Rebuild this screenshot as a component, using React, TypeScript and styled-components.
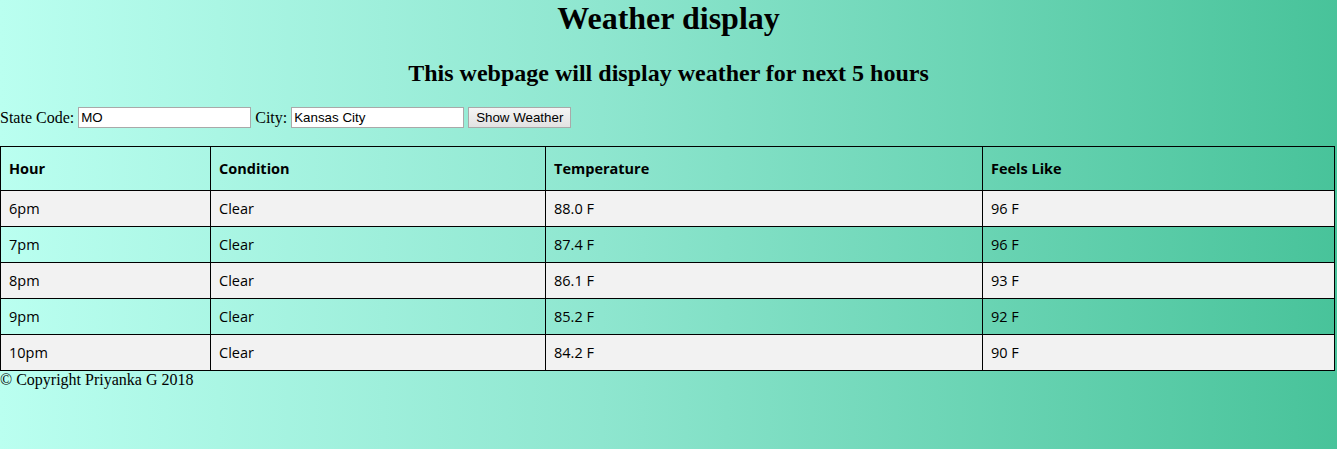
import React from "react";
import styled, { createGlobalStyle } from "styled-components";

const Global = createGlobalStyle`
  html, body { margin: 0; padding: 0; }
  body {
    min-height: 449px;
    font-family: "Liberation Serif", "Times New Roman", serif;
    font-size: 16px;
    color: #000;
    background: linear-gradient(to right, #bafff0 0%, #8ee6cf 45%, #48c39a 100%);
  }
`;

const Page = styled.div`
  min-height: 449px;
`;

const Title = styled.h1`
  margin: 0;
  text-align: center;
  font-size: 32px;
  line-height: 37px;
  font-weight: bold;
`;

const Subtitle = styled.h2`
  margin: 22px 0 0;
  text-align: center;
  font-size: 24px;
  line-height: 28px;
  font-weight: bold;
`;

const Form = styled.form`
  display: flex;
  align-items: center;
  height: 21px;
  margin-top: 20px;
  margin-bottom: 18px;
`;

const Label = styled.label`
  margin-right: 4px;
`;

const Input = styled.input<{ $w: number }>`
  box-sizing: border-box;
  width: ${(p) => p.$w}px;
  height: 21px;
  border: 1px solid #a9a9a9;
  background: #fff;
  font-family: "Liberation Sans", Arial, sans-serif;
  font-size: 13.33px;
  padding: 1px 2px;
  margin: 0 4px 0 0;
`;

const Button = styled.button`
  box-sizing: border-box;
  height: 21px;
  width: 103px;
  border: 1px solid #a9a9a9;
  background: linear-gradient(#f5f5f5, #e2e2e2);
  font-family: "Liberation Sans", Arial, sans-serif;
  font-size: 13.33px;
  color: #000;
  padding: 0 6px;
  margin: 0;
`;

const Table = styled.table`
  border-collapse: collapse;
  width: 1334px;
  table-layout: fixed;
  font-family: "Open Sans", "DejaVu Sans", sans-serif;
  font-size: 14.5px;
`;

const Th = styled.th`
  border: 1px solid #000;
  text-align: left;
  padding: 12px 8px;
  height: 19px;
  font-weight: bold;
`;

const Row = styled.tr<{ $alt: boolean }>`
  background: ${(p) => (p.$alt ? "transparent" : "#f2f2f2")};
`;

const Td = styled.td`
  border: 1px solid #000;
  padding: 8px 8px;
  height: 19px;
`;

const Footer = styled.div`
  line-height: 18px;
`;

const rows = [
  ["6pm", "Clear", "88.0 F", "96 F"],
  ["7pm", "Clear", "87.4 F", "96 F"],
  ["8pm", "Clear", "86.1 F", "93 F"],
  ["9pm", "Clear", "85.2 F", "92 F"],
  ["10pm", "Clear", "84.2 F", "90 F"],
];

export default function App() {
  return (
    <Page>
      <Global />
      <Title>Weather display</Title>
      <Subtitle>This webpage will display weather for next 5 hours</Subtitle>
      <Form onSubmit={(e) => e.preventDefault()}>
        <Label>State Code:</Label>
        <Input $w={173} defaultValue="MO" />
        <Label>City:</Label>
        <Input $w={173} defaultValue="Kansas City" />
        <Button type="button">Show Weather</Button>
      </Form>
      <Table>
        <colgroup>
          <col style={{ width: 210 }} />
          <col style={{ width: 335 }} />
          <col style={{ width: 437 }} />
          <col style={{ width: 352 }} />
        </colgroup>
        <thead>
          <tr>
            <Th>Hour</Th>
            <Th>Condition</Th>
            <Th>Temperature</Th>
            <Th>Feels Like</Th>
          </tr>
        </thead>
        <tbody>
          {rows.map((r, i) => (
            <Row key={i} $alt={i % 2 === 1}>
              {r.map((c, j) => (
                <Td key={j}>{c}</Td>
              ))}
            </Row>
          ))}
        </tbody>
      </Table>
      <Footer>© Copyright Priyanka G 2018</Footer>
    </Page>
  );
}
